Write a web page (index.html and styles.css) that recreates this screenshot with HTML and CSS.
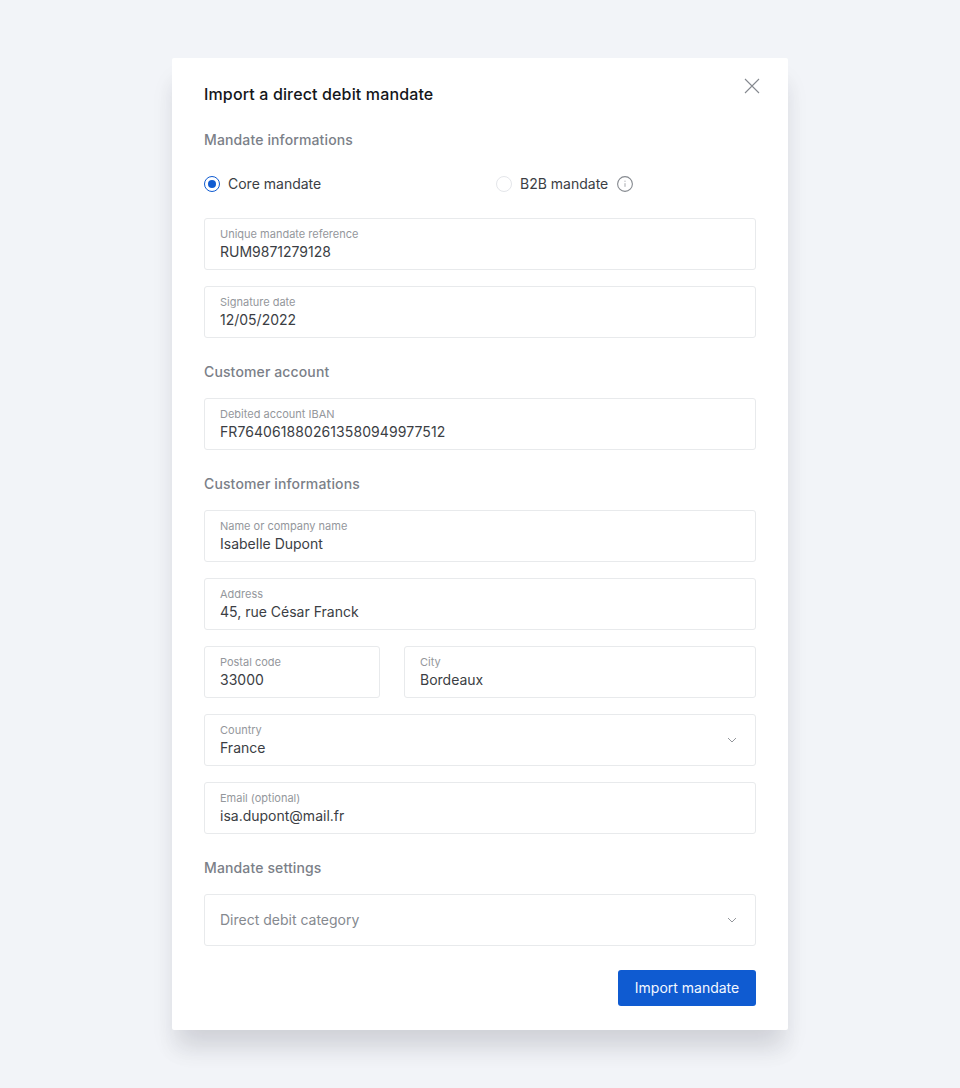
FILE: index.html
```html
<!DOCTYPE html>
<html lang="en">
<head>
<meta charset="utf-8">
<title>Import a direct debit mandate</title>
<link rel="stylesheet" href="styles.css">
</head>
<body>
<main class="modal">
  <button class="close" aria-label="Close">
    <svg width="16" height="16" viewBox="0 0 16 16" fill="none" stroke="#85898f" stroke-width="1.1"><path d="M1 1l14 14M15 1L1 15"/></svg>
  </button>
  <h1 class="title">Import a direct debit mandate</h1>
  <h2 class="section first">Mandate informations</h2>
  <div class="radios">
    <div class="radio-item"><span class="radio checked"></span><span>Core mandate</span></div>
    <div class="radio-item"><span class="radio"></span><span>B2B mandate</span>
      <svg class="info" width="16" height="16" viewBox="0 0 16 16" fill="none"><circle cx="8" cy="8" r="7.4" stroke="#85898f" stroke-width="1.1"/><path d="M8 7.2v3.6" stroke="#a5a8ad"/><circle cx="8" cy="5.2" r=".6" fill="#a5a8ad"/></svg>
    </div>
  </div>
  <div class="stack">
    <div class="field"><span class="label">Unique mandate reference</span><span class="value">RUM9871279128</span></div>
    <div class="field"><span class="label">Signature date</span><span class="value">12/05/2022</span></div>
  </div>
  <h2 class="section">Customer account</h2>
  <div class="stack">
    <div class="field"><span class="label">Debited account IBAN</span><span class="value iban">FR7640618802613580949977512</span></div>
  </div>
  <h2 class="section">Customer informations</h2>
  <div class="stack">
    <div class="field"><span class="label">Name or company name</span><span class="value">Isabelle Dupont</span></div>
    <div class="field"><span class="label">Address</span><span class="value">45, rue César Franck</span></div>
    <div class="row">
      <div class="field postal"><span class="label">Postal code</span><span class="value">33000</span></div>
      <div class="field city"><span class="label">City</span><span class="value">Bordeaux</span></div>
    </div>
    <div class="field select"><span class="label">Country</span><span class="value">France</span>
      <svg class="chevron" width="10" height="6" viewBox="0 0 10 6" fill="none" stroke="#94979c" stroke-width="1"><path d="M1 1l4 4 4-4"/></svg>
    </div>
    <div class="field"><span class="label">Email (optional)</span><span class="value">isa.dupont@mail.fr</span></div>
  </div>
  <h2 class="section">Mandate settings</h2>
  <div class="stack">
    <div class="field select placeholder"><span class="value">Direct debit category</span>
      <svg class="chevron" width="10" height="6" viewBox="0 0 10 6" fill="none" stroke="#94979c" stroke-width="1"><path d="M1 1l4 4 4-4"/></svg>
    </div>
  </div>
  <div class="actions"><button class="primary">Import mandate</button></div>
</main>
</body>
</html>
```

FILE: styles.css
```css
* { box-sizing: border-box; }
html, body { margin: 0; height: 1088px; overflow: hidden; }
body {
  background: #f2f4f8;
  font-family: Inter, "Liberation Sans", sans-serif;
  color: #2a2d33;
  padding-top: 58px;
}
.modal {
  position: relative;
  width: 616px;
  height: 972px;
  margin: 0 auto;
  padding: 24px 32px 0;
  background: #fff;
  border-radius: 2px;
  box-shadow: 0 20px 24px -6px rgba(25, 30, 45, 0.15), 0 24px 20px 2px rgba(30, 40, 60, 0.025);
}
.close {
  position: absolute;
  top: 20px;
  right: 28px;
  padding: 0;
  border: 0;
  background: none;
  display: flex;
}
.title {
  margin: 0;
  font-size: 16px;
  line-height: 24px;
  font-weight: 500;
  letter-spacing: 0.14px;
  color: #14161a;
}
.section {
  margin: 24px 0 16px;
  font-size: 14px;
  line-height: 20px;
  font-weight: 500;
  letter-spacing: 0.13px;
  color: #7b8088;
}
.section.first { margin-top: 24px; margin-bottom: 0; }
.radios {
  display: grid;
  grid-template-columns: 292px 1fr;
  height: 24px;
  margin: 22px 0 22px;
}
.radio-item {
  display: flex;
  align-items: center;
  gap: 8px;
  font-size: 14px;
  line-height: 20px;
  color: #3b3e44;
}
.radio {
  width: 16px;
  height: 16px;
  border: 1px solid #e4e6ea;
  border-radius: 50%;
  display: flex;
  align-items: center;
  justify-content: center;
}
.radio.checked { border-color: #0f5bd1; }
.radio.checked::after {
  content: "";
  width: 8px;
  height: 8px;
  border-radius: 50%;
  background: #0f5bd1;
}
.info { margin-left: 1px; }
.stack { display: flex; flex-direction: column; gap: 16px; }
.row { display: flex; gap: 24px; }
.field {
  position: relative;
  height: 52px;
  padding: 8px 15px 0;
  border: 1px solid #e8eaec;
  border-radius: 3px;
  background: #fff;
  display: flex;
  flex-direction: column;
}
.postal { width: 176px; }
.city { flex: 1; }
.label {
  font-size: 11px;
  line-height: 14px;
  color: #94979c;
}
.value {
  font-size: 14px;
  line-height: 20px;
  margin-top: 1px;
  color: #3b3e44;
}
.iban { letter-spacing: 0.08px; }
.placeholder { justify-content: center; padding-top: 0; }
.placeholder .value { margin: 0; color: #85898f; }
.chevron {
  position: absolute;
  right: 18px;
  top: 22px;
}
.actions { display: flex; justify-content: flex-end; margin-top: 24px; }
.primary {
  width: 138px;
  height: 36px;
  padding: 0;
  border: 0;
  border-radius: 3px;
  background: #0f5bd1;
  color: #f4f8ff;
  font: 400 14px/20px Inter, "Liberation Sans", sans-serif;
}
```
